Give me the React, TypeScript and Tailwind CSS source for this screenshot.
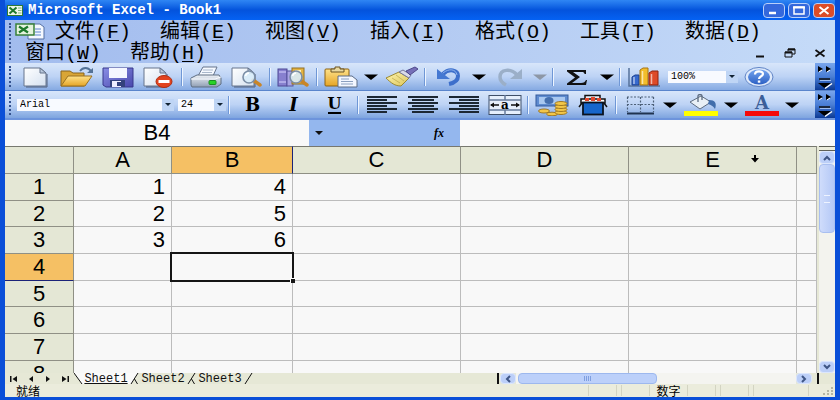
import React, { useState } from 'react';
import clsx from 'clsx';

const MENUS = [
    ['文件', 'F'], ['编辑', 'E'], ['视图', 'V'], ['插入', 'I'], ['格式', 'O'],
    ['工具', 'T'], ['数据', 'D'], ['窗口', 'W'], ['帮助', 'H'],
];

const COLUMNS = ['A', 'B', 'C', 'D', 'E', ''];
const ROWS = [1, 2, 3, 4, 5, 6, 7, 8];
const VALUES: Record<string, string> = { A1: '1', A2: '2', A3: '3', B1: '4', B2: '5', B3: '6' };

type Kids = { children?: React.ReactNode };

//Every toolbar picture is drawn on the same 34x22 canvas
function Icon({ children }: Kids) {
    return <svg viewBox="0 0 34 22" className="w-[34px] h-[22px] shrink-0" aria-hidden="true">{children}</svg>
}

function Tool({ label, children }: Kids & { label: string }) {
    return (
        <button type="button" aria-label={label} className="w-[41px] h-full shrink-0 grid place-items-center">
            {children}
        </button>
    )
}

function Arrow({ label, dim }: { label: string, dim?: boolean }) {
    return (
        <button type="button" aria-label={label} className="w-5 h-full shrink-0 grid place-items-center">
            <svg viewBox="0 0 14 6" className={clsx('w-[14px] h-[6px]', dim ? 'text-[#8d97a6]' : 'text-black')}>
                <path d="M0 0.5h14L7 6z" fill="currentColor" />
            </svg>
        </button>
    )
}

function Separator() {
    return (
        <div className="w-[6px] h-[18px] shrink-0 flex justify-center">
            <div className="w-px bg-[#6f97d6]" />
            <div className="w-px bg-[#eef5ff]" />
        </div>
    )
}

function Grip() {
    return <div className="w-0 self-stretch my-[3px] ml-1 mr-1 border-l-2 border-dotted border-[#34528f]" />
}

function Combo({ label, value, className }: { label: string, value: string, className: string }) {
    return (
        <label className={clsx('relative shrink-0 h-3 bg-[#f8faff]', className)}>
            <select aria-label={label} defaultValue={value} className="appearance-none block w-full h-3 pl-[3px] text-[10px] leading-3 text-black bg-transparent">
                <option>{value}</option>
            </select>
            <span className="absolute right-0 top-0 w-3 h-3 grid place-items-center bg-[#bfd5f5] pointer-events-none">
                <svg viewBox="0 0 6 3" className="w-[6px] h-[3px]"><path d="M0 0h6L3 3z" fill="#123" /></svg>
            </span>
        </label>
    )
}

//Double arrow on top, customise arrow at the bottom
function Overflow() {
    return (
        <button type="button" aria-label="工具栏选项" className="w-5 h-full ml-auto shrink-0 bg-gradient-to-b from-[#79a5ec] via-[#4b7fd6] to-[#0c3a94]">
            <svg viewBox="0 0 20 27" className="w-5 h-full" preserveAspectRatio="none">
                <path d="M3 3l5 3-5 3zM11 3l5 3-5 3z" fill="#000" />
                <path d="M4 9l3-2M12 9l3-2" stroke="#fff" strokeWidth="1" />
                <path d="M4 16h11" stroke="#111" strokeWidth="1.5" />
                <path d="M5 17.5h11" stroke="#9dbcf0" strokeWidth="1" />
                <path d="M3 20h13l-6.500 5z" fill="#000" />
                <path d="M10 25.500l7-5" stroke="#fff" strokeWidth="1.500" />
            </svg>
        </button>
    )
}

function Align({ widths }: { widths: [number, number][] }) {
    return (
        <Icon>
            {widths.map(([x, w], i) => <rect key={i} x={x} y={2 + i * 3} width={w} height="2" fill="#1c2733" shapeRendering="crispEdges" />)}
        </Icon>
    )
}

function ExcelMark({ className }: { className: string }) {
    return (
        <svg viewBox="0 0 16 11" className={className} preserveAspectRatio="none" aria-hidden="true">
            <rect x="0.500" y="0.500" width="15" height="10" fill="#eef6e8" stroke="#2f7a35" />
            <path d="M11 3h3.500M11 5.500h3.500M11 8h3.500" stroke="#7fb77d" />
            <path d="M2.500 2.500l7 6M9.500 2.500l-7 6" stroke="#1f7a2c" strokeWidth="2" />
        </svg>
    )
}

function Magnifier() {
    return (
        <>
            <path d="M23 14l7 5" stroke="#c98528" strokeWidth="3.500" strokeLinecap="round" />
            <circle cx="19" cy="11" r="6" fill="#d8ecfa" fillOpacity="0.900" stroke="#7b8ea6" strokeWidth="1.600" />
            <path d="M15.500 10a4 4 0 013.500-3" stroke="#fff" strokeWidth="1.500" fill="none" />
        </>
    )
}

function Page() {
    return (
        <>
            <path d="M5 2h16l6 5v13H5z" fill="url(#paper)" stroke="#66748c" />
            <path d="M21 2v5h6z" fill="#b9c8dc" stroke="#66748c" />
            <path d="M28 8v13H7" stroke="#52617a" fill="none" />
        </>
    )
}

function StandardToolbar() {
    return (
        <div className="h-[27px] flex items-center bg-gradient-to-b from-[#d8e6fa] via-[#bdd3f5] to-[#86aae2] font-['Liberation_Mono',monospace]">
            <Grip />
            <Tool label="新建"><Icon><Page /></Icon></Tool>
            <Tool label="打开">
                <Icon>
                    <path d="M1 5h9l3 2h11v13H1z" fill="#d9a536" stroke="#8a651c" />
                    <path d="M1 20l7-10h24l-7 10z" fill="url(#gold)" stroke="#9a7120" />
                    <path d="M20 5c3-4 8-4 11 0" fill="none" stroke="#537297" strokeWidth="1.800" />
                    <path d="M33 2v5h-6z" fill="#537297" />
                </Icon>
            </Tool>
            <Tool label="保存">
                <Icon>
                    <path d="M2 2h30v19H5l-3-2z" fill="url(#violet)" stroke="#38388c" />
                    <rect x="8" y="2" width="18" height="10" fill="#f4f6ff" />
                    <rect x="9" y="14" width="15" height="7" fill="#33427c" />
                    <rect x="11" y="15" width="9" height="6" fill="#eef" />
                    <rect x="16" y="16" width="4" height="4" fill="#33427c" />
                </Icon>
            </Tool>
            <Tool label="权限">
                <Icon>
                    <g transform="translate(-3 0)"><Page /></g>
                    <ellipse cx="22" cy="15.500" rx="8" ry="6" fill="#e2431e" stroke="#b02c10" />
                    <rect x="16.500" y="14" width="11" height="3" fill="#fff" />
                </Icon>
            </Tool>
            <Separator />
            <Tool label="打印">
                <Icon>
                    <path d="M9 10l5-9h14l-4 9z" fill="#f5f9ff" stroke="#66748c" />
                    <path d="M14 4h10M13 6.500h10" stroke="#a9b8cc" />
                    <path d="M2 12l6-3h22l2 3v6l-4 3H3l-1-2z" fill="url(#silver)" stroke="#5f6e82" />
                    <path d="M2 13h24l6-2" stroke="#f8fbff" fill="none" />
                    <rect x="20" y="14.500" width="7" height="4" rx="1" fill="#28d326" stroke="#1b9020" />
                </Icon>
            </Tool>
            <Tool label="打印预览"><Icon><g transform="translate(-3 0)"><Page /></g><Magnifier /></Icon></Tool>
            <Separator />
            <Tool label="信息检索">
                <Icon>
                    <rect x="1" y="3" width="9" height="17" fill="#8780cf" stroke="#4c4793" />
                    <path d="M2 6h7M2 16h7" stroke="#d8d5ff" />
                    <rect x="10" y="5" width="6" height="15" fill="#a9a4e4" stroke="#57529d" />
                    <rect x="15" y="2" width="12" height="16" fill="#e4b341" stroke="#947024" />
                    <path d="M18 5h6" stroke="#fff3b8" strokeWidth="2" />
                    <Magnifier />
                </Icon>
            </Tool>
            <Separator />
            <Tool label="粘贴">
                <Icon>
                    <rect x="1" y="3" width="24" height="17" rx="1" fill="url(#gold)" stroke="#8d6213" />
                    <path d="M7 5V3h4V1h5v2h4v3H7z" fill="#e9d9a0" stroke="#6b5320" />
                    <path d="M14 10h14l5 4v7H14z" fill="#f3f7ff" stroke="#5d6c86" />
                    <path d="M17 13h8M17 15.500h12M17 18h12" stroke="#8ca0bf" />
                </Icon>
            </Tool>
            <Arrow label="粘贴选项" />
            <Tool label="格式刷">
                <Icon>
                    <path d="M1 12l13-6 10 6-8 8c-6 0-10-3-15-8z" fill="url(#brush)" stroke="#9b8a35" />
                    <path d="M7 12l8 5M11 9l8 6" stroke="#b9a64b" strokeWidth="0.700" />
                    <path d="M14 6l4-2 8 5-2 3z" fill="#d9d9e8" stroke="#77779a" />
                    <path d="M21 5l9-4 3 2-8 6z" fill="#7670b8" stroke="#4f4a8c" />
                </Icon>
            </Tool>
            <Separator />
            <Tool label="撤消">
                <Icon>
                    <path d="M11 8c6-6 15-4 15 2 0 5-4 7-9 8" fill="none" stroke="#3d6fcb" strokeWidth="4" />
                    <path d="M11 7c6-5 13-4 14 2" fill="none" stroke="#8fb4ee" strokeWidth="1" />
                    <path d="M5 3v10h13z" fill="#4478d2" />
                </Icon>
            </Tool>
            <Arrow label="撤消选项" />
            <Tool label="恢复">
                <Icon>
                    <path d="M24 9C18 2 7 3 7 11c0 4 2 6 6 8" fill="none" stroke="#9bafc8" strokeWidth="3.500" />
                    <path d="M29 3v10H17z" fill="#9bafc8" />
                </Icon>
            </Tool>
            <Arrow label="恢复选项" dim />
            <Separator />
            <Tool label="自动求和">
                <Icon>
                    <path d="M7 4h19v4h-1.500c0-1.500-1-2-3-2H13l7 5-8 6h9c3 0 4-1 5-3h1l-1 5H7v-1.500l8-6-8-6z" fill="#111" />
                </Icon>
            </Tool>
            <Arrow label="求和选项" />
            <Separator />
            <Tool label="图表向导">
                <Icon>
                    <path d="M2 2v18h31" fill="none" stroke="#55719b" strokeWidth="1.500" />
                    <path d="M5 11l3-2h4v10H5z" fill="#3769cd" stroke="#1f428f" />
                    <path d="M13 4l3-2h5v17h-8z" fill="#f2bd2b" stroke="#a87512" />
                    <path d="M22 7l3-2h6v14h-9z" fill="#dd4a29" stroke="#8f2411" />
                    <path d="M7 11v7M15.500 5v13M24.500 8v10" stroke="#fff" strokeOpacity="0.600" strokeWidth="1.500" />
                </Icon>
            </Tool>
            <Combo label="显示比例" value="100%" className="w-[70px] ml-1" />
            <Tool label="帮助">
                <Icon>
                    <ellipse cx="17" cy="11" rx="14" ry="9.500" fill="#dfeafb" stroke="#5e83c6" />
                    <ellipse cx="17" cy="11" rx="11" ry="7.500" fill="url(#help)" />
                    <path d="M13 8.500c0-4 8-4 8-.5 0 2.500-4 2-4 5" fill="none" stroke="#fff" strokeWidth="2.200" />
                    <rect x="15.800" y="14.500" width="2.500" height="2.200" fill="#fff" />
                </Icon>
            </Tool>
            <Overflow />
        </div>
    )
}

function FormatToolbar() {
    return (
        <div className="h-7 flex items-center bg-gradient-to-b from-[#d8e6fa] via-[#bdd3f5] to-[#7ea4df] border-t border-[#5a85cc] font-['Liberation_Mono',monospace]">
            <Grip />
            <Combo label="字体" value="Arial" className="w-[157px] ml-[2px]" />
            <Combo label="字号" value="24" className="w-12 ml-1" />
            <Separator />
            <Tool label="加粗">
                <span className="font-['DejaVu_Serif',serif] font-bold text-[18px] leading-5">B</span>
            </Tool>
            <Tool label="倾斜">
                <span className="font-['DejaVu_Serif',serif] font-bold italic text-[18px] leading-5">I</span>
            </Tool>
            <Tool label="下划线">
                <span className="font-['DejaVu_Serif',serif] font-bold text-[16px] leading-4 border-b-2 border-black">U</span>
            </Tool>
            <Separator />
            <Tool label="左对齐"><Align widths={[[2, 30], [2, 20], [2, 30], [2, 20], [2, 30], [2, 20]]} /></Tool>
            <Tool label="居中"><Align widths={[[2, 30], [6, 22], [2, 30], [6, 22], [2, 30], [6, 22]]} /></Tool>
            <Tool label="右对齐"><Align widths={[[2, 30], [12, 20], [2, 30], [12, 20], [2, 30], [12, 20]]} /></Tool>
            <Tool label="合并及居中">
                <Icon>
                    <rect x="1" y="1.500" width="32" height="19" fill="#e6effc" stroke="#3f4f68" />
                    <path d="M1 6h32M1 16h32M17 1v5M17 16v5" stroke="#667b9b" strokeWidth="1.500" />
                    <path d="M3 11h8M31 11h-8" stroke="#111" strokeWidth="1.500" />
                    <path d="M2 11l4-2.500v5zM32 11l-4-2.500v5z" fill="#111" />
                    <text x="17" y="14.500" textAnchor="middle" fontSize="12" fontWeight="700" fontFamily="DejaVu Serif, serif">a</text>
                </Icon>
            </Tool>
            <Separator />
            <Tool label="货币样式">
                <Icon>
                    <rect x="1" y="1" width="32" height="11" fill="#5f8cd0" stroke="#355b9c" />
                    <rect x="4" y="3" width="26" height="7" fill="#a9c8f0" />
                    <ellipse cx="14" cy="6.500" rx="4.500" ry="3.500" fill="#456fae" />
                    <g fill="#f2c648" stroke="#99701b" strokeWidth="0.900">
                        <ellipse cx="9" cy="17" rx="5.500" ry="2" />
                        <ellipse cx="17" cy="20" rx="5.500" ry="1.800" />
                        <ellipse cx="26" cy="18.500" rx="6" ry="2" />
                        <ellipse cx="26" cy="15.500" rx="6" ry="2" />
                        <ellipse cx="26" cy="12.500" rx="6" ry="2" />
                        <ellipse cx="26" cy="9.500" rx="6" ry="2" />
                    </g>
                </Icon>
            </Tool>
            <Tool label="样式">
                <Icon>
                    <path d="M9 5V1.500h15V5" fill="#e8eef8" stroke="#111" strokeWidth="1.500" />
                    <path d="M5 5h24v4H5z" fill="#fff" stroke="#111" strokeWidth="1.500" />
                    <path d="M9 4h4v3H9zM15 3h4v4h-4zM21 4h4v3h-4z" fill="#e5482d" />
                    <path d="M6 9l-3 4M28 9l3 4" stroke="#111" strokeWidth="1.500" />
                    <rect x="7" y="8.500" width="20" height="12" fill="#1766cb" stroke="#0b1320" strokeWidth="1.800" />
                </Icon>
            </Tool>
            <Separator />
            <Tool label="边框">
                <Icon>
                    <path d="M4 3h27M4 10.500h27M4.500 3v15M17.500 3v15M30.500 3v15" stroke="#4d6078" strokeWidth="1.200" strokeDasharray="2 1.500" fill="none" />
                    <path d="M4 19.500h27" stroke="#1f3350" strokeWidth="2" />
                </Icon>
            </Tool>
            <Arrow label="边框选项" />
            <Tool label="填充颜色">
                <Icon>
                    <path d="M6 8l11-6 10 6-11 7z" fill="#e9f0f6" stroke="#5d6c80" />
                    <path d="M14 8V2c0-2 4-2 4 0v4" fill="none" stroke="#5d6c80" strokeWidth="1.300" />
                    <path d="M25 6c6 0 8 3 6 9-2-3-4-4-7-5z" fill="#426eab" />
                    <rect y="17" width="34" height="5" fill="#ffff00" />
                </Icon>
            </Tool>
            <Arrow label="填充选项" />
            <Tool label="字体颜色">
                <Icon>
                    <text x="17" y="15" textAnchor="middle" fontSize="18" fontWeight="700" fill="#3c5f99" fontFamily="DejaVu Serif, serif">A</text>
                    <rect y="17" width="34" height="5" fill="#f60a0a" />
                </Icon>
            </Tool>
            <Arrow label="字体颜色选项" />
            <Overflow />
        </div>
    )
}

function TitleBar() {
    const box = 'w-[22px] h-[15px] rounded-sm border border-[#b9d0fa] grid place-items-center';
    return (
        <header className="h-5 flex items-center gap-[3px] pl-[2px] bg-gradient-to-b from-[#2f86f4] via-[#0453dc] to-[#0562f3]">
            <ExcelMark className="w-4 h-[11px] shrink-0" />
            <h1 className="flex-1 pl-[2px] font-['Liberation_Mono',monospace] font-bold text-[14px] leading-5 text-white whitespace-nowrap">Microsoft Excel - Book1</h1>
            <button type="button" aria-label="最小化" className={clsx(box, 'bg-[#3468dc]')}>
                <svg viewBox="0 0 12 9" className="w-3 h-[9px]"><path d="M1 7h7" stroke="#fff" strokeWidth="2.500" /></svg>
            </button>
            <button type="button" aria-label="最大化" className={clsx(box, 'bg-[#3468dc]')}>
                <svg viewBox="0 0 12 9" className="w-3 h-[9px]"><path d="M1 1v7h10V1z" fill="none" stroke="#fff" strokeWidth="1.500" /><path d="M0 1.500h12" stroke="#fff" strokeWidth="2" /></svg>
            </button>
            <button type="button" aria-label="关闭" className={clsx(box, 'bg-[#dc4d28]')}>
                <svg viewBox="0 0 12 9" className="w-3 h-[9px]"><path d="M1.500 1l9 7M10.500 1l-9 7" stroke="#fff" strokeWidth="2" /></svg>
            </button>
        </header>
    )
}

function MenuBar() {
    return (
        <nav className="flex bg-gradient-to-r from-[#a2bcee] via-[#b3caf2] to-[#c5dbf8]">
            <Grip />
            <div className="flex-1 flex flex-wrap pt-px pl-[10px]">
                <div className="w-[30px] h-[21px] -ml-[10px] mr-[10px] flex items-center">
                    <svg viewBox="0 0 30 17" className="w-[30px] h-[17px]" aria-hidden="true">
                        <path d="M13 1h12l4 3v12H13z" fill="#f4f8ff" stroke="#5470a3" />
                        <path d="M20 6h6M20 9h6M20 12h6" stroke="#5c86cc" />
                        <rect x="1" y="1" width="18" height="11" fill="#e5f3dd" stroke="#38803a" strokeWidth="1.500" />
                        <path d="M4 3.500l9 6M13 3.500l-9 6" stroke="#1f7a2c" strokeWidth="2.200" />
                    </svg>
                </div>
                {MENUS.map(([name, key]) => (
                    <button type="button" key={key} className="w-[105px] h-[21px] text-left text-[20px] leading-[23px] text-black whitespace-nowrap font-['Liberation_Mono','Noto_Sans_CJK_SC',monospace]">
                        {name}(<u className="decoration-1 underline-offset-2">{key}</u>)
                    </button>
                ))}
                <div className="ml-auto flex items-center">
                    <button type="button" aria-label="最小化窗口" className="w-[30px] h-4 grid place-items-center">
                        <svg viewBox="0 0 12 10" className="w-3 h-[10px]"><path d="M2 8.500h8" stroke="#111" strokeWidth="2" /></svg>
                    </button>
                    <button type="button" aria-label="还原窗口" className="w-[30px] h-4 grid place-items-center">
                        <svg viewBox="0 0 12 10" className="w-3 h-[10px]" fill="none" stroke="#111">
                            <path d="M4 3V1h7v5H8" /><path d="M4 1.500h7" strokeWidth="2" />
                            <path d="M1 4h7v5H1z" /><path d="M1 4.500h7" strokeWidth="2" />
                        </svg>
                    </button>
                    <button type="button" aria-label="关闭窗口" className="w-[30px] h-4 grid place-items-center">
                        <svg viewBox="0 0 12 10" className="w-3 h-[10px]"><path d="M1.500 2l9 6.500M10.500 2l-9 6.500" stroke="#111" strokeWidth="1.800" /></svg>
                    </button>
                </div>
            </div>
        </nav>
    )
}

function FormulaBar({ cell }: { cell: string }) {
    return (
        <div className="h-7 flex border-t-2 border-[#6d94dc] bg-[#f9f9f9]">
            <input aria-label="名称框" readOnly value={cell} className="w-[304px] min-w-0 text-center text-[22px] leading-[26px] bg-transparent" />
            <div className="w-[151px] shrink-0 flex items-center justify-between pl-[6px] pr-4 bg-[#94b7ee]">
                <button type="button" aria-label="名称列表">
                    <svg viewBox="0 0 8 4" className="w-2 h-1"><path d="M0 0h8L4 4z" fill="#111" /></svg>
                </button>
                <button type="button" aria-label="插入函数" className="font-['Liberation_Serif',serif] italic font-bold text-[12px] leading-3">fx</button>
            </div>
            <input aria-label="编辑栏" className="flex-1 min-w-0 px-1 text-[22px] bg-transparent" />
        </div>
    )
}

function Sheet({ col, row, onSelect }: { col: string, row: number, onSelect: (col: string, row: number) => void }) {
    const head = 'relative p-0 font-normal border-r border-b border-[#8f9085]';
    return (
        <table className="w-[812px] table-fixed border-separate border-spacing-0 text-[22px] leading-[22px] text-black">
            <colgroup>
                <col className="w-[69px]" />
                <col className="w-[98px]" />
                <col className="w-[121px]" />
                <col className="w-[168px]" />
                <col className="w-[168px]" />
                <col className="w-[168px]" />
                <col />
            </colgroup>
            <thead>
                <tr className="h-7">
                    <th className={clsx(head, 'border-t border-t-[#77786f] bg-[#e4e7d5]')} />
                    {COLUMNS.map((name, i) => (
                        <th key={i} className={clsx(head, 'border-t border-t-[#77786f]', name === col ? 'bg-[#f5c064] border-r-[#1b2378]' : 'bg-[#e4e7d5]')}>
                            {name}
                            {name === 'E' && (
                                <svg viewBox="0 0 8 8" className="absolute right-[37px] top-2 w-2 h-2" aria-hidden="true">
                                    <path d="M3 0h2v3h3L4 7.500 0 3h3z" fill="#000" />
                                </svg>
                            )}
                        </th>
                    ))}
                </tr>
            </thead>
            <tbody>
                {ROWS.map(r => (
                    <tr key={r} className="h-[27px] nth-[3n+2]:h-[26px]">
                        <th className={clsx(head, r === row ? 'bg-[#f5c064] border-b-[#1b2378]' : 'bg-[#e4e7d5]')}>{r}</th>
                        {COLUMNS.map((name, i) => (
                            <td key={i} onClick={() => onSelect(name, r)} className="relative p-0 pr-[6px] text-right bg-[#f8f8f8] border-r border-b border-[#bcbcbc]">
                                {VALUES[name + r]}
                                {name === col && r === row && (
                                    <div className="absolute -inset-[2px] z-10 border-2 border-[#151515]">
                                        <div className="absolute -right-[3px] -bottom-[3px] w-[5px] h-[5px] bg-[#151515] border-l border-t border-white" />
                                    </div>
                                )}
                            </td>
                        ))}
                    </tr>
                ))}
            </tbody>
        </table>
    )
}

function ScrollButton({ label, d, className }: { label: string, d: string, className: string }) {
    return (
        <button type="button" aria-label={label} className={clsx('shrink-0 grid place-items-center rounded-sm border border-[#dbe6fd] bg-[#bccff8]', className)}>
            <svg viewBox="0 0 8 8" className="w-2 h-2"><path d={d} fill="none" stroke="#3f5686" strokeWidth="2" /></svg>
        </button>
    )
}

function VerticalScroll() {
    return (
        <div className="w-4 shrink-0 flex flex-col bg-[#f3f3ee]">
            <div className="h-[5px] border-y border-[#5f6057] bg-[#eceddd]" />
            <ScrollButton label="向上滚动" className="h-[13px]" d="M1 6l3-3 3 3" />
            <div className="h-[69px] rounded-sm border border-[#a9bff0] bg-gradient-to-r from-[#cfdcfb] to-[#b4c8f6] grid place-items-center">
                <div className="w-[6px] h-2 border-y border-[#eef3ff]" />
            </div>
            <ScrollButton label="向下滚动" className="h-3 mt-auto" d="M1 2l3 3 3-3" />
        </div>
    )
}

function SheetTabs() {
    const nav = [
        ['第一张', 'M1 0v8h1.500V0zM8 0v8L3.500 4z'],
        ['上一张', 'M6 0v8L2 4z'],
        ['下一张', 'M2 0v8l4-4z'],
        ['最后一张', 'M0 0v8l4.500-4zM5.500 0v8H7V0z'],
    ];
    return (
        <div className="h-[11px] flex bg-[#e6e8d6]">
            <div className="w-[69px] shrink-0 flex justify-between px-1">
                {nav.map(([label, d]) => (
                    <button type="button" key={label} aria-label={label} className="w-2 grid place-items-center">
                        <svg viewBox="0 0 8 8" className="w-2 h-[6px]" preserveAspectRatio="none"><path d={d} fill="#111" /></svg>
                    </button>
                ))}
            </div>
            <div className="flex flex-1 font-['Liberation_Mono',monospace] text-[12px] leading-3 text-[#111]">
                <svg viewBox="0 0 9 11" className="w-[9px] h-[11px]"><path d="M0 0h9v11H8z" fill="#fafafa" /><path d="M0 0l8 11" stroke="#111" /></svg>
                {['Sheet1', 'Sheet2', 'Sheet3'].map((name, i) => (
                    <React.Fragment key={name}>
                        <button type="button" className={clsx('w-[46px] h-[11px] text-center', i === 0 && 'bg-[#fafafa] underline underline-offset-1')}>{name}</button>
                        <svg viewBox="0 0 11 11" className="w-[11px] h-[11px]">
                            {i === 0 && <path d="M0 0h9L2 11H0z" fill="#fafafa" />}
                            <path d="M9 0L2 11" stroke="#111" />
                            {i < 2 && <path d="M5.500 6l3 5" stroke="#111" />}
                        </svg>
                    </React.Fragment>
                ))}
            </div>
            <div className="w-[338px] shrink-0 flex pr-4">
                <div className="w-[2px] bg-[#111]" />
                <ScrollButton label="向左滚动" className="w-4 ml-px" d="M6 1L3 4l3 3" />
                <div className="flex-1 flex bg-[#f4f4f0]">
                    <div className="w-[139px] ml-[2px] rounded-sm border border-[#9db8ee] bg-[#bcd0fa] flex justify-center items-center gap-px">
                        {[0, 1, 2, 3].map(i => <div key={i} className="w-px h-[5px] bg-[#7f9fe0]" />)}
                    </div>
                </div>
                <ScrollButton label="向右滚动" className="w-4" d="M2 1l3 3-3 3" />
                <div className="w-[7px] border-r-2 border-[#111]" />
            </div>
        </div>
    )
}

function StatusBar() {
    const panel = 'h-[11px] w-[29px] border-x border-[#d3d4c2]';
    return (
        <footer className="h-[13px] flex items-center bg-[#ebecdc] font-['Noto_Sans_CJK_SC',sans-serif] text-[12px] leading-[13px] text-black">
            <span className="flex-1 pl-[11px]">就绪</span>
            <div className="flex items-center gap-1">
                <div className={panel} />
                <div className={panel} />
                <span className="w-[29px] text-center">数字</span>
                <div className={panel} />
                <div className={panel} />
                <div className="h-[11px] w-14 border-x border-[#d3d4c2]" />
            </div>
            <svg viewBox="0 0 14 10" className="w-[14px] h-[10px] ml-3">
                <path d="M10 1h2v2h-2zM6 4h2v2H6zM10 4h2v2h-2zM2 7h2v2H2zM6 7h2v2H6zM10 7h2v2h-2z" fill="#b5b6a4" />
            </svg>
        </footer>
    )
}

export default function App() {

    const [selected, setSelected] = useState({ col: 'B', row: 4 });

    return (
        <div className="h-screen flex flex-col overflow-hidden bg-[#0a4fd8] px-[5px] pb-[3px] font-['Liberation_Sans',sans-serif]">
            {/* Shared gradients for the toolbar pictures */}
            <svg className="absolute w-0 h-0" aria-hidden="true">
                <defs>
                    <linearGradient id="paper" x2="1" y2="1"><stop stopColor="#fff" /><stop offset="1" stopColor="#d5e1f0" /></linearGradient>
                    <linearGradient id="gold" x2="0" y2="1"><stop stopColor="#ffe28a" /><stop offset="1" stopColor="#e5a526" /></linearGradient>
                    <linearGradient id="violet" x2="1" y2="1"><stop stopColor="#8a8ee6" /><stop offset="1" stopColor="#4848ac" /></linearGradient>
                    <linearGradient id="silver" x2="0" y2="1"><stop stopColor="#eef2f7" /><stop offset="1" stopColor="#8f9eb3" /></linearGradient>
                    <linearGradient id="brush" x2="1" y2="1"><stop stopColor="#fff6b0" /><stop offset="1" stopColor="#dcc45a" /></linearGradient>
                    <linearGradient id="help" x2="0" y2="1"><stop stopColor="#74a4ee" /><stop offset="1" stopColor="#2c60c4" /></linearGradient>
                </defs>
            </svg>
            <TitleBar />
            <MenuBar />
            <StandardToolbar />
            <FormatToolbar />
            <FormulaBar cell={selected.col + selected.row} />
            <div className="flex-1 min-h-0 flex bg-[#e6e8d6]">
                <div className="flex-1 min-w-0 overflow-hidden">
                    <Sheet col={selected.col} row={selected.row} onSelect={(col, row) => setSelected({ col, row })} />
                </div>
                <VerticalScroll />
            </div>
            <SheetTabs />
            <StatusBar />
        </div>
    )
}
